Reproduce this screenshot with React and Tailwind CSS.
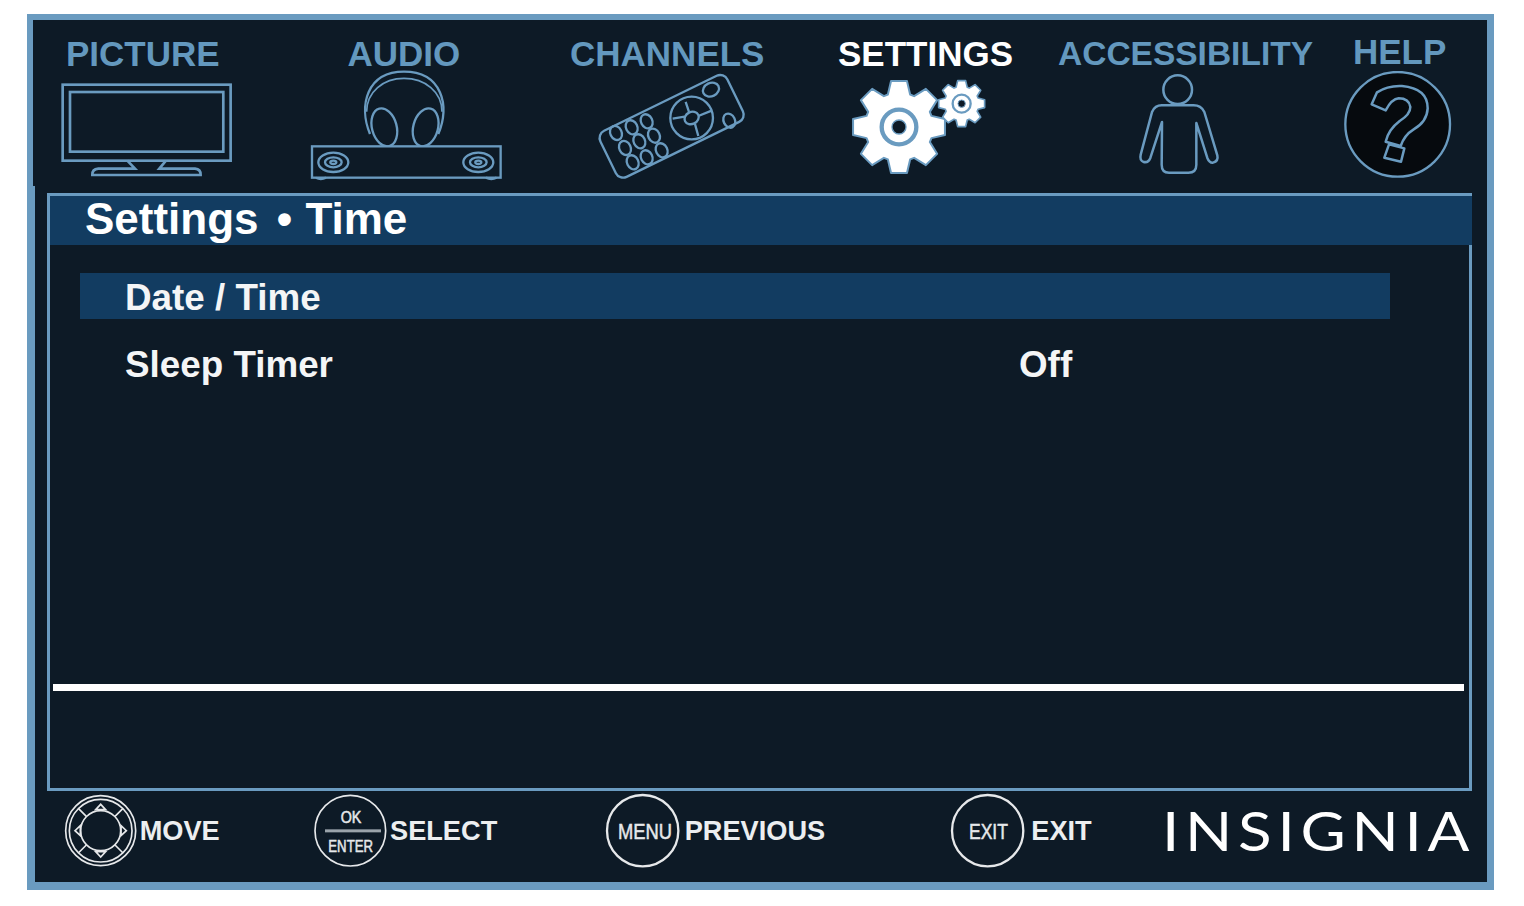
const gear = (cx, cy, ro, ri, n, tw = 0.42) => {
  const pts = [];
  for (let i = 0; i < n; i++) {
    const a = (i * 2 * Math.PI) / n - Math.PI / 2;
    const s = (Math.PI * 2) / n;
    const p = (r, d) => `${(cx + r * Math.cos(a + d)).toFixed(1)},${(cy + r * Math.sin(a + d)).toFixed(1)}`;
    pts.push(p(ri, -s * tw), p(ro, -s * tw * 0.52), p(ro, s * tw * 0.52), p(ri, s * tw));
  }
  return pts.join(" ");
};

const B = "#6a9bc0";
const W = "#e6e8ea";

function Tv() {
  return (
    <svg className="ml-[27px] mt-[12px]" width="173.3" height="96.7" viewBox="120 230 520 290" fill="none" stroke={B} strokeWidth="8">
      <rect x="128" y="241" width="504" height="228" />
      <rect x="150" y="263" width="460" height="179" />
      <path d="M322 469 L345 493 H235 Q216 495 217 512 H542 Q543 495 525 493 H418 L438 469" />
    </svg>
  );
}

function Audio() {
  return (
    <svg className="ml-[10px]" width="193.3" height="111.7" viewBox="870 190 580 335" fill="none" stroke={B} strokeWidth="7">
      <path d="M1050 385 C1015 300 1040 198 1152 198 C1265 198 1292 300 1255 385" />
      <path d="M1040 318 C1040 258 1090 218 1152 218 C1215 218 1266 258 1266 318" strokeWidth="5" />
      <ellipse cx="1093" cy="365" rx="37" ry="58" transform="rotate(-15 1093 365)" fill="#0d1a26" />
      <ellipse cx="1217" cy="365" rx="37" ry="58" transform="rotate(15 1217 365)" fill="#0d1a26" />
      <rect x="876" y="422" width="566" height="94" fill="#0d1a26" />
      <ellipse cx="940" cy="470" rx="45" ry="29" />
      <ellipse cx="940" cy="470" rx="25" ry="15" />
      <ellipse cx="940" cy="470" rx="9" ry="5" />
      <ellipse cx="1375" cy="470" rx="45" ry="29" />
      <ellipse cx="1375" cy="470" rx="25" ry="15" />
      <ellipse cx="1375" cy="470" rx="9" ry="5" />
      <path d="M888 516 Q902 524 918 516 M1398 516 Q1414 524 1430 516" />
    </svg>
  );
}

function Remote() {
  const keys = [
    [288, 385], [335, 368], [380, 350],
    [315, 430], [358, 410], [402, 393],
    [338, 473], [380, 458], [425, 437],
  ];
  return (
    <svg className="ml-[58px] mt-[4px]" width="153.3" height="108.3" viewBox="225 205 460 325" fill="none" stroke={B} strokeWidth="7">
      <rect x="243" y="288" width="424" height="154" rx="24" transform="rotate(-26 455 365)" />
      {keys.map(([x, y]) => (
        <ellipse key={`${x}-${y}`} cx={x} cy={y} rx="17" ry="22" transform={`rotate(-26 ${x} ${y})`} />
      ))}
      <circle cx="515" cy="340" r="64" />
      <ellipse cx="515" cy="340" rx="22" ry="18" transform="rotate(-26 515 340)" />
      <path d="M458 342 L494 336 M535 334 L575 318 M497 292 L507 322 M525 358 L535 394" />
      <ellipse cx="573" cy="255" rx="25" ry="20" transform="rotate(-26 573 255)" />
      <ellipse cx="628" cy="348" rx="17" ry="22" transform="rotate(-26 628 348)" />
    </svg>
  );
}

function Gears() {
  return (
    <svg className="ml-[12px] mt-[8px]" width="140" height="98.3" viewBox="990 215 420 295">
      <polygon points={gear(1140, 365, 140, 103, 8)} fill="#ffffff" stroke={B} strokeWidth="6" strokeLinejoin="round" />
      <circle cx="1140" cy="365" r="52" fill="none" stroke={B} strokeWidth="13" />
      <circle cx="1140" cy="365" r="21" fill="#0d1a26" stroke={B} strokeWidth="4" />
      <polygon points={gear(1328, 295, 70, 52, 8)} fill="#ffffff" stroke={B} strokeWidth="5" strokeLinejoin="round" />
      <circle cx="1328" cy="295" r="27" fill="none" stroke={B} strokeWidth="7" />
      <circle cx="1328" cy="295" r="11" fill="#0d1a26" stroke={B} strokeWidth="3" />
    </svg>
  );
}

function Person() {
  return (
    <svg className="ml-[78px] mt-[4px]" width="86.7" height="103.3" viewBox="335 205 260 310" fill="none" stroke={B} strokeWidth="7.5" strokeLinejoin="round">
      <circle cx="460" cy="255" r="43" />
      <path d="M412 302 H508 Q530 302 540 322 L579 452 Q583 470 566 474 Q555 475 549 460 L516 355 V480 Q516 504 492 504 H434 Q412 504 412 480 L413 352 L378 460 Q372 475 358 472 Q345 468 349 450 L383 322 Q392 302 412 302 Z" />
    </svg>
  );
}

function Help() {
  return (
    <svg className="-ml-[11px] mt-[4px]" width="111.7" height="106.7" viewBox="955 200 335 320">
      <circle cx="1122" cy="360" r="157" fill="#060a0e" stroke={B} strokeWidth="7" />
      <g fill="none" stroke={B} strokeWidth="7.5" strokeLinejoin="round">
        <path d="M1044 300 L1060 264 Q1092 243 1135 245 Q1212 252 1212 312 Q1210 352 1170 375 Q1142 392 1131 425 L1086 412 Q1094 376 1128 350 Q1160 330 1160 308 Q1156 282 1125 282 Q1104 284 1086 318 Z" />
        <path d="M1096 420 L1142 432 L1132 472 L1082 460 Z" />
      </g>
    </svg>
  );
}

const tabs = [
  { label: "PICTURE", width: "w-[267px]", text: "ml-[33px] text-[35px]", Icon: Tv },
  { label: "AUDIO", width: "w-[237px]", text: "ml-[47.5px] text-[35px]", Icon: Audio },
  { label: "CHANNELS", width: "w-[300px]", text: "ml-[33px] text-[35px]", Icon: Remote },
  { label: "SETTINGS", width: "w-[221px]", text: "ml-[1px] text-[35px] text-white", Icon: Gears },
  { label: "ACCESSIBILITY", width: "w-[295px]", text: "ml-[0px] text-[33.5px]", Icon: Person },
  { label: "HELP", width: "w-[134px]", text: "ml-[0px] -mt-[2px] text-[35px]", Icon: Help },
];

function Tab({ label, width, text, Icon }) {
  return (
    <div className={`${width} shrink-0 flex flex-col items-start`}>
      <div className={`${text} h-[30px] font-bold leading-[30px] whitespace-nowrap`}>{label}</div>
      <Icon />
    </div>
  );
}

function MoveIcon() {
  return (
    <svg width="76.7" height="76.7" viewBox="130 70 230 230" fill="none" stroke={W} strokeWidth="5">
      <circle cx="243" cy="183" r="105" />
      <circle cx="243" cy="183" r="94" />
      <circle cx="243" cy="183" r="60" strokeWidth="5" />
      <path d="M200 140 L176 116 M286 140 L310 116 M200 226 L176 250 M286 226 L310 250" />
      <path d="M228 120 L243 104 L258 120 Z M228 246 L243 262 L258 246 Z M182 168 L166 183 L182 198 Z M304 168 L320 183 L304 198 Z" />
    </svg>
  );
}

function OkIcon() {
  return (
    <svg className="overflow-visible" width="75" height="76.7" viewBox="880 70 225 230">
      <circle cx="992" cy="183" r="106" fill="none" stroke={W} strokeWidth="5" />
      <rect x="916" y="179" width="168" height="9" fill="#9aa3aa" />
      <text x="963" y="160" textLength="62" lengthAdjust="spacingAndGlyphs" fontSize="50" fill={W} stroke={W} strokeWidth="1.5">OK</text>
      <text x="926" y="246" textLength="134" lengthAdjust="spacingAndGlyphs" fontSize="50" fill={W} stroke={W} strokeWidth="1.5">ENTER</text>
    </svg>
  );
}

function MenuIcon() {
  return (
    <svg className="overflow-visible" width="76.7" height="76.7" viewBox="45 70 230 230">
      <circle cx="158" cy="183" r="107" fill="none" stroke={W} strokeWidth="7" />
      <text x="84" y="207" textLength="162" lengthAdjust="spacingAndGlyphs" fontSize="68" fill={W} stroke={W} strokeWidth="1.5">MENU</text>
    </svg>
  );
}

function ExitIcon() {
  return (
    <svg className="overflow-visible" width="75.3" height="76.7" viewBox="1082 70 226 230">
      <circle cx="1195" cy="183" r="107" fill="none" stroke={W} strokeWidth="7" />
      <text x="1139" y="207" textLength="117" lengthAdjust="spacingAndGlyphs" fontSize="68" fill={W} stroke={W} strokeWidth="1.5">EXIT</text>
    </svg>
  );
}

function Hint({ width, Icon, label, gap }) {
  return (
    <div className={`${width} shrink-0 flex items-start`}>
      <Icon />
      <span className={`${gap} text-[27.2px] leading-[76px] font-bold text-[#eceef0] whitespace-nowrap`}>{label}</span>
    </div>
  );
}

export default function App() {
  return (
    <div className="w-[1524px] h-[906px] bg-white pt-[14px] pl-[27px] font-['Liberation_Sans',Arial,sans-serif]">
      <div className="relative w-[1467px] h-[876px] border-t-[6px] border-l-[6px] border-r-[7px] border-b-[8px] border-[#6a9bc0] bg-[#0d1a26] flex flex-col">
        <div className="absolute left-0 top-[166px] bottom-0 w-[2px] bg-[#6a9bc0]" />
        <div className="h-[173px] shrink-0 flex pt-[19px] text-[#6398be]">
          {tabs.map((t) => (
            <Tab key={t.label} {...t} />
          ))}
        </div>
        <div className="ml-[14px] mr-[15px] h-[598px] shrink-0 border-[3px] border-[#6a9bc0] flex flex-col">
          <div className="h-[49px] shrink-0 -mr-[3px] bg-[#123c61] pl-[35px] text-[44px] leading-[46px] font-bold text-white whitespace-pre">
            Settings <span className="ml-[6px] mr-[1px]">•</span> Time
          </div>
          <div className="mt-[28px] ml-[30px] w-[1310px] flex flex-col">
            <div className="h-[46px] bg-[#123c61] pl-[45px] text-[36.8px] leading-[50px] font-bold text-[#f4f5f6]">Date / Time</div>
            <div className="mt-[23px] h-[46px] pl-[45px] flex text-[36.8px] leading-[45px] font-bold text-[#f4f5f6]">
              <span className="w-[894px]">Sleep Timer</span>
              <span>Off</span>
            </div>
          </div>
          <div className="mt-auto mb-[97px] ml-[3px] mr-[5px] h-[7px] bg-white" />
        </div>
        <div className="flex-1 flex items-start pt-[2px] pl-[30px]">
          <Hint width="w-[250px]" Icon={MoveIcon} label="MOVE" gap="ml-0" />
          <Hint width="w-[292px]" Icon={OkIcon} label="SELECT" gap="ml-[2px]" />
          <Hint width="w-[345px]" Icon={MenuIcon} label="PREVIOUS" gap="ml-[3px]" />
          <Hint width="w-[212px]" Icon={ExitIcon} label="EXIT" gap="ml-[6px]" />
          <span className="font-['Lato',sans-serif] font-normal text-[54px] leading-[76px] tracking-[5px] text-white whitespace-nowrap origin-left scale-x-[1.147]">INSIGNIA</span>
        </div>
      </div>
    </div>
  );
}
